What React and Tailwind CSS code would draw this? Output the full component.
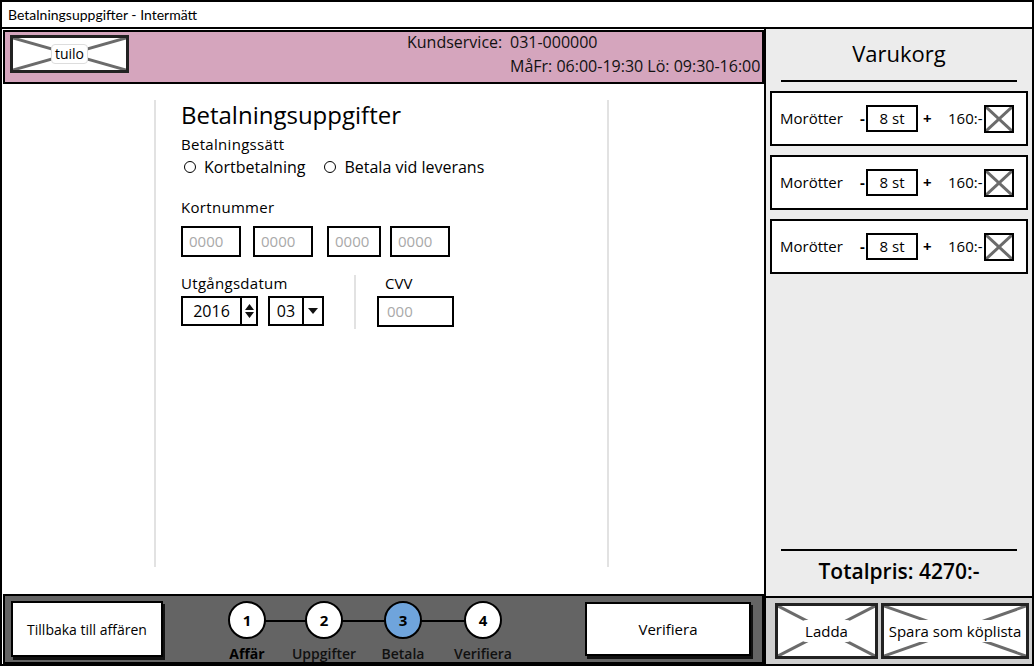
import React from 'react';

const font = { fontFamily: '"Open Sans", Lato, sans-serif' };
const chrome = { fontFamily: 'Lato, "Open Sans", sans-serif' };

// gray cross used by image placeholders
const Cross = ({ className = '' }) => (
  <svg className={`absolute inset-0 w-full h-full ${className}`} preserveAspectRatio="none" viewBox="0 0 100 100">
    <line x1="0" y1="0" x2="100" y2="100" stroke="#6b6b6b" strokeWidth="3" vectorEffect="non-scaling-stroke" />
    <line x1="100" y1="0" x2="0" y2="100" stroke="#6b6b6b" strokeWidth="3" vectorEffect="non-scaling-stroke" />
  </svg>
);

const CardInput = ({ w = 60 }) => (
  <div
    style={{ width: w }}
    className="h-[31px] border-2 border-black bg-white flex items-center pl-[6px] text-[15px] text-[#a9a9a9]"
  >
    0000
  </div>
);

const CartItem = () => (
  <div className="h-[55px] bg-white border-2 border-black flex items-center pl-[8px] text-[15px] text-black">
    <span className="w-[80px] whitespace-nowrap">Morötter</span>
    <span className="font-bold w-[6px]">-</span>
    <div className="w-[52px] h-[27px] border-2 border-black flex items-center justify-center">8 st</div>
    <span className="font-bold ml-[5px] w-[25px]">+</span>
    <span className="w-[36px] whitespace-nowrap">160:-</span>
    <div className="relative w-[30px] h-[28px] border-2 border-black">
      <Cross />
    </div>
  </div>
);

const Step = ({ n, label, active, bold }) => (
  <div className="relative flex flex-col items-center w-[40px]">
    <div
      className={`w-[38px] h-[38px] rounded-full border-2 border-black flex items-center justify-center text-[15px] font-bold ${
        active ? 'bg-[#6fa4dc]' : 'bg-white'
      }`}
    >
      {n}
    </div>
    <span
      className={`absolute top-[42px] whitespace-nowrap text-[14px] ${bold ? 'font-bold text-black' : 'font-semibold text-[#111]'}`}
    >
      {label}
    </span>
  </div>
);

const App = () => {
  return (
    <div style={font} className="w-[1034px] h-[666px] bg-white text-black overflow-hidden">
      <div className="w-full h-full border-2 border-black flex flex-col">
        {/* title bar */}
        <div style={chrome} className="h-[27px] border-b-2 border-black flex items-center px-[6px] text-[14px]">
          Betalningsuppgifter - Intermätt
        </div>

        <div className="flex-1 flex">
          {/* left column */}
          <div className="w-[764px] flex flex-col border-r-2 border-black">
            {/* header */}
            <div className="h-[54px] mt-[1px] ml-[1px] bg-[#d5a5bd] border-2 border-black flex overflow-x-clip">
              <div className="relative shrink-0 w-[119px] h-[38px] mt-[3px] ml-[5px] bg-white border-[3px] border-[#222]">
                <Cross />
                <div className="absolute inset-0 flex items-center justify-center">
                  <span className="bg-white rounded-[4px] border border-[#ddd] px-[3px] text-[14px] leading-[18px]">tuilo</span>
                </div>
              </div>
              <div className="ml-[278px] flex flex-col text-[16px] leading-[20px] text-[#111] whitespace-nowrap pt-[-1px]">
                <div className="flex">
                  <span className="w-[103px]">Kundservice:</span>
                  <span>031-000000</span>
                </div>
                <div className="ml-[103px] mt-[4px]">MåFr: 06:00-19:30 Lö: 09:30-16:00</div>
              </div>
            </div>

            {/* main */}
            <div className="flex-1 flex pt-[16px] pb-[26px]">
              <div className="w-[154px] border-r-2 border-[#e2e2e2]" />
              <div className="w-[453px] border-r-2 border-[#e2e2e2] pl-[25px]">
                <div className="text-[24px] leading-[28px] font-medium mt-[1px]">Betalningsuppgifter</div>
                <div className="text-[15px] tracking-[0.3px] mt-[6px] leading-[18px]">Betalningssätt</div>
                <div className="flex items-center text-[16px] mt-[4px] leading-[20px]">
                  <span className="w-[12px] h-[12px] rounded-full border-[1.5px] border-black mr-[8px] ml-[3px]" />
                  <span className="mr-[19px]">Kortbetalning</span>
                  <span className="w-[12px] h-[12px] rounded-full border-[1.5px] border-black mr-[8px]" />
                  <span>Betala vid leverans</span>
                </div>
                <div className="text-[15px] tracking-[0.3px] mt-[20px] leading-[20px]">Kortnummer</div>
                <div className="flex mt-[9px]">
                  <CardInput w={60} />
                  <div className="w-[12px]" />
                  <CardInput w={60} />
                  <div className="w-[14px]" />
                  <CardInput w={54} />
                  <div className="w-[9px]" />
                  <CardInput w={60} />
                </div>
                <div className="flex mt-[16px]">
                  <div>
                    <div className="text-[15px] tracking-[0.3px] leading-[20px]">Utgångsdatum</div>
                    <div className="flex mt-[3px] gap-[10px]">
                      <div className="w-[77px] h-[30px] border-2 border-black flex items-center text-[16px]">
                        <span className="flex-1 text-center">2016</span>
                        <div className="w-[16px] h-full border-l-2 border-black flex items-center justify-center">
                          <svg width="11" height="16" viewBox="0 0 11 16">
                            <path d="M5.5 1 L10 7 L1 7 Z M1 9 L10 9 L5.5 15 Z" fill="#111" />
                          </svg>
                        </div>
                      </div>
                      <div className="w-[56px] h-[30px] border-2 border-black flex items-center text-[16px]">
                        <span className="w-[32px] text-center">03</span>
                        <div className="flex-1 h-full border-l-2 border-black flex items-center justify-center">
                          <svg width="10" height="6" viewBox="0 0 10 6">
                            <path d="M0 0 L10 0 L5 6 Z" fill="#111" />
                          </svg>
                        </div>
                      </div>
                    </div>
                  </div>
                  <div className="w-[2px] h-[54px] bg-[#e2e2e2] ml-[30px] mt-[2px]" />
                  <div className="ml-[21px]">
                    <div className="text-[15px] leading-[20px] pl-[8px]">CVV</div>
                    <div className="w-[77px] h-[31px] border-2 border-black mt-[3px] flex items-center pl-[8px] text-[15px] text-[#a9a9a9]">
                      000
                    </div>
                  </div>
                </div>
              </div>
            </div>

            {/* footer */}
            <div className="h-[70px] mt-[1px] ml-[1px] bg-[#646464] border-2 border-black flex items-center">
              <div className="ml-[6px] w-[152px] h-[56px] bg-white border-2 border-black shadow-[2px_3px_0_#111] flex items-center justify-center text-[14px]">
                Tillbaka till affären
              </div>
              <div className="relative ml-[64px] mb-[18px] flex items-center">
                <div className="absolute left-[20px] right-[20px] top-[19px] h-[2px] bg-black" />
                <Step n="1" label="Affär" bold />
                <div className="w-[37px]" />
                <Step n="2" label="Uppgifter" />
                <div className="w-[39px]" />
                <Step n="3" label="Betala" active />
                <div className="w-[40px]" />
                <Step n="4" label="Verifiera" />
              </div>
              <div className="ml-[82px] w-[166px] h-[54px] bg-white border-2 border-black shadow-[2px_3px_0_#111] flex items-center justify-center text-[15px]">
                Verifiera
              </div>
            </div>
          </div>

          {/* right column */}
          <div className="flex-1 flex flex-col">
            <div className="flex-1 bg-[#ececec] flex flex-col px-[4px] pt-[10px] pb-[12px]">
              <div className="text-center text-[22px] leading-[28px]">Varukorg</div>
              <div className="mx-[11px] mt-[13px] h-[2px] bg-black" />
              <div className="flex flex-col gap-[9px] mt-[9px]">
                <CartItem />
                <CartItem />
                <CartItem />
              </div>
              <div className="flex-1" />
              <div className="mx-[11px] h-[2px] bg-black" />
              <div className="text-center text-[21px] mt-[7px] leading-[26px] font-semibold">Totalpris: 4270:-</div>
            </div>
            <div className="h-[68px] border-t-2 border-black bg-[#cfcfcf] flex items-center gap-[3px] pl-[9px] pr-[3px]">
              <div className="relative w-[103px] h-[56px] bg-white border-[3px] border-[#222]">
                <Cross />
                <div className="absolute inset-0 flex items-center justify-center">
                  <span className="bg-white rounded-[4px] px-[3px] text-[15px]">Ladda</span>
                </div>
              </div>
              <div className="relative flex-1 h-[56px] bg-white border-[3px] border-[#222]">
                <Cross />
                <div className="absolute inset-0 flex items-center justify-center">
                  <span className="bg-white rounded-[4px] px-[1px] text-[15px] whitespace-nowrap">Spara som köplista</span>
                </div>
              </div>
            </div>
          </div>
        </div>
      </div>
    </div>
  );
};

export default App;
